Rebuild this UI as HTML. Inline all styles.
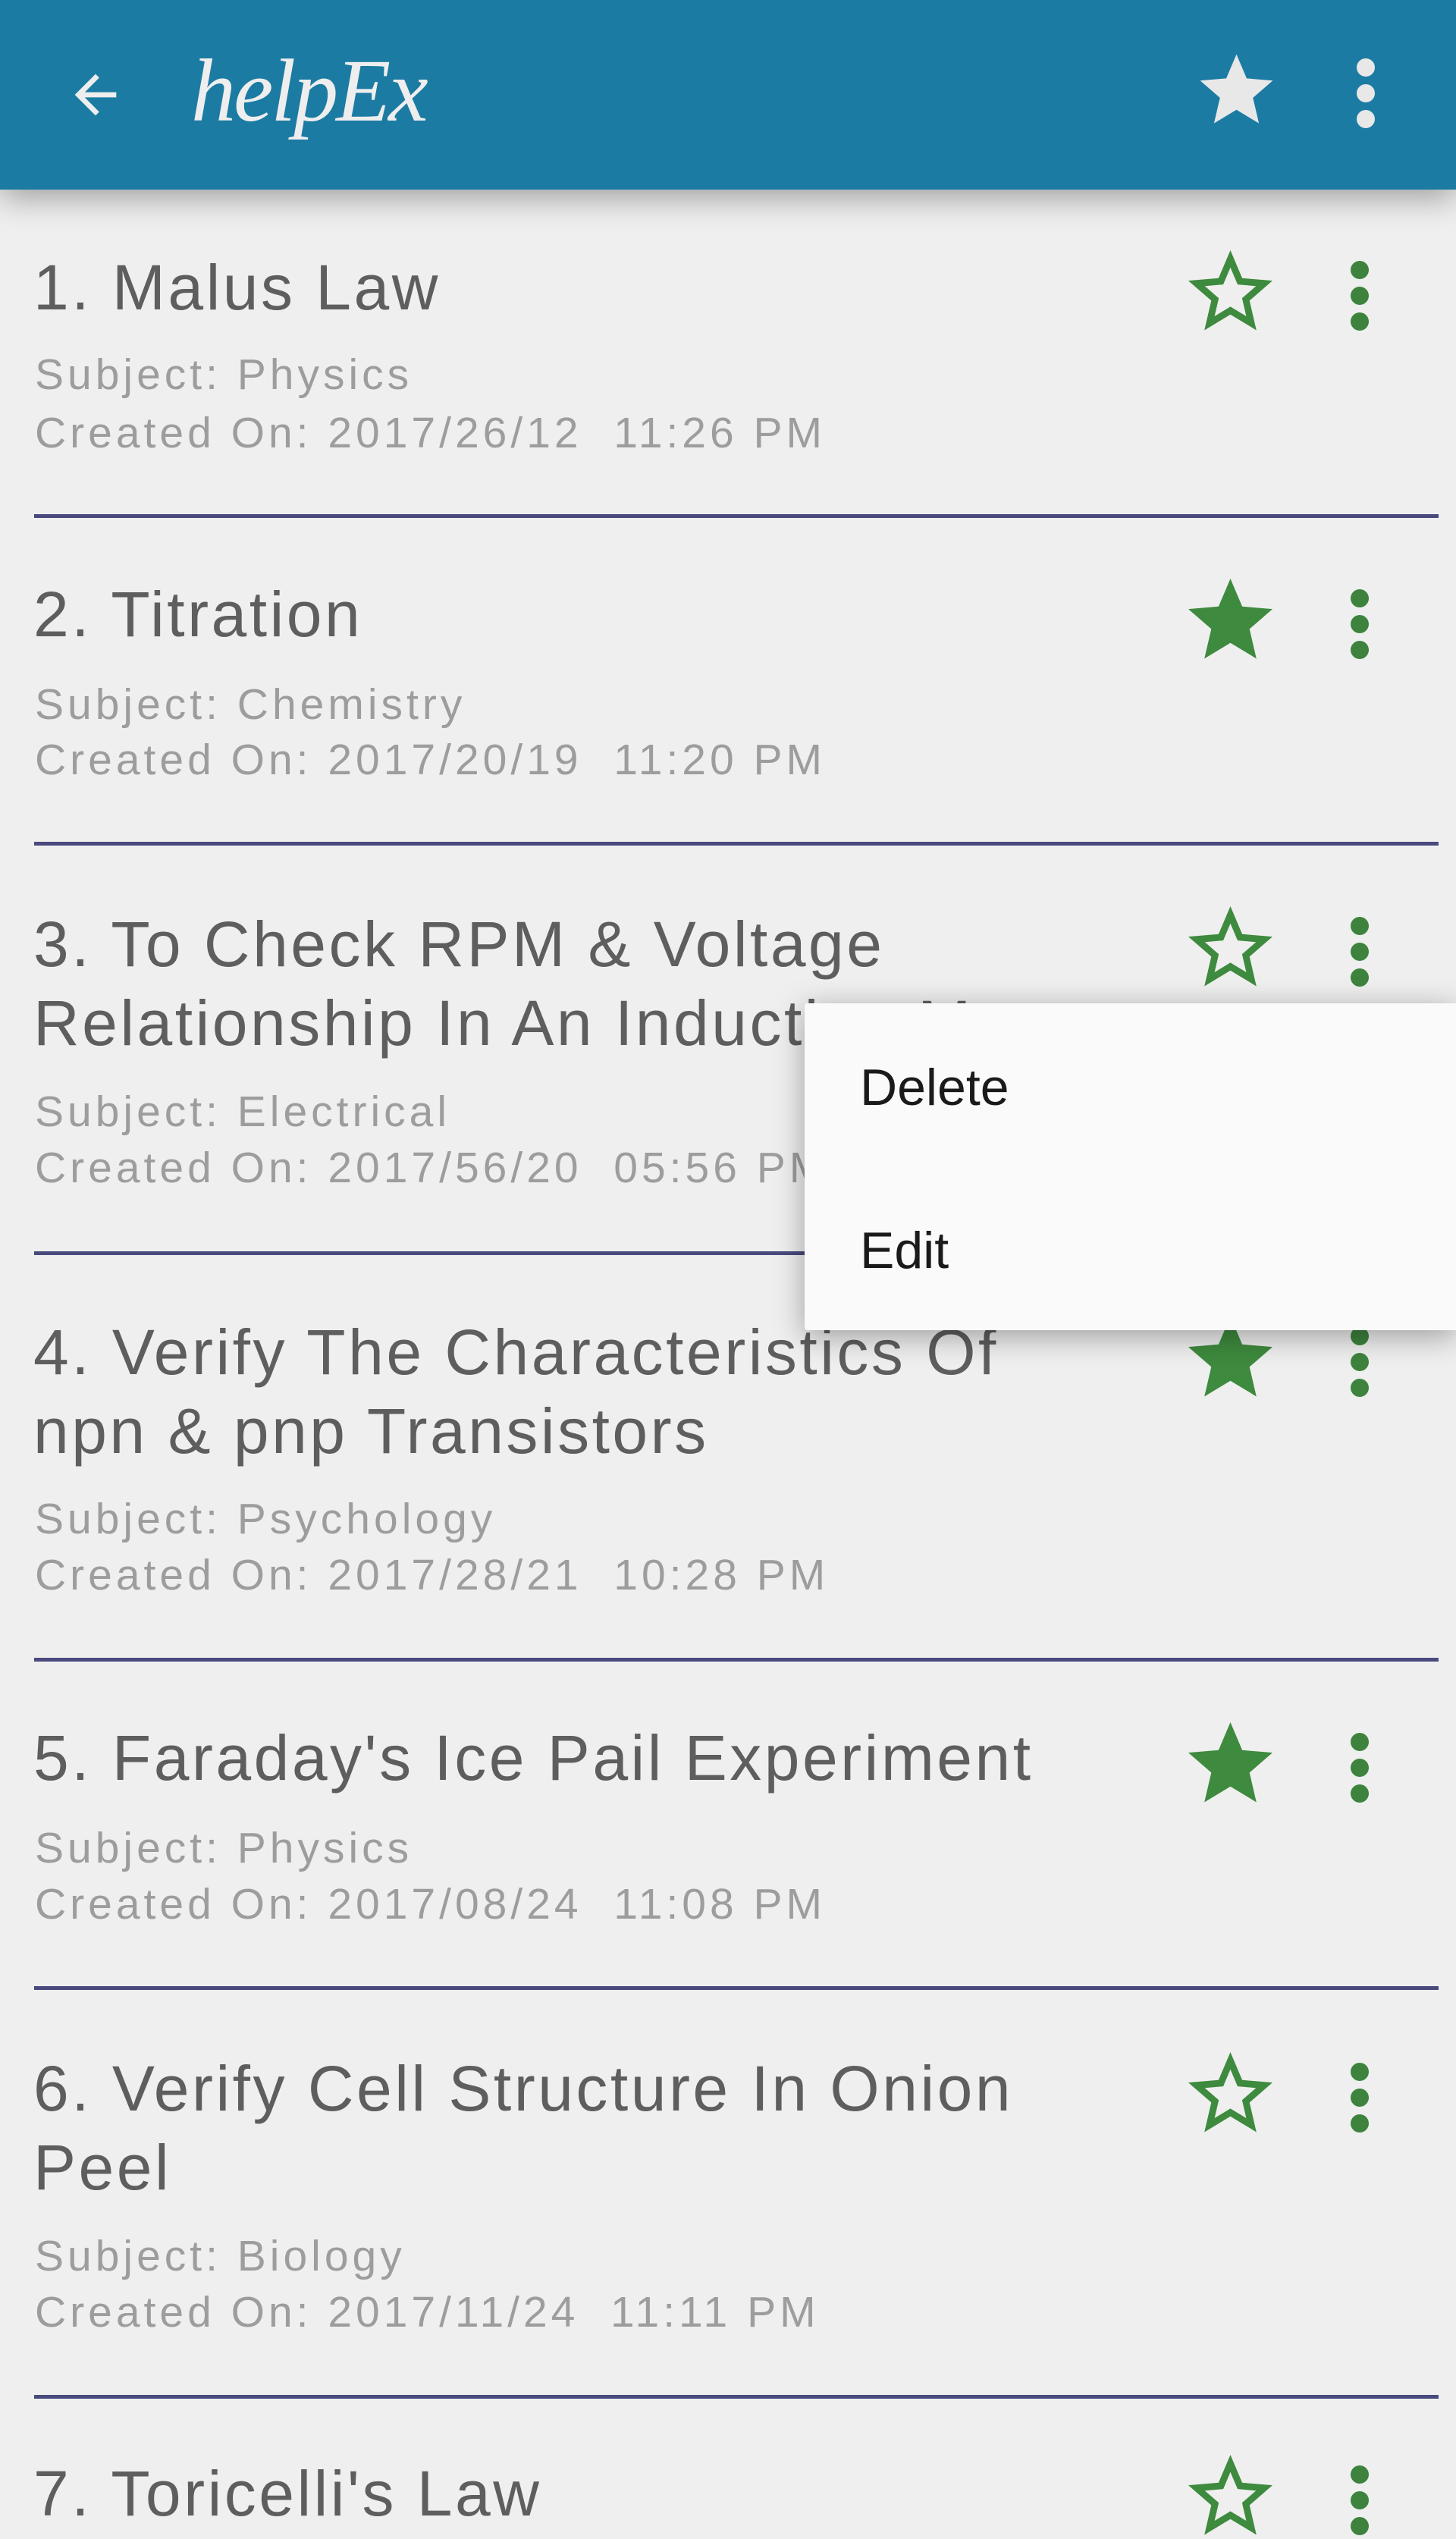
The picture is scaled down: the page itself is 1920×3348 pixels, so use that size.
<!DOCTYPE html>
<html><head><meta charset="utf-8"><style>
*{margin:0;padding:0;box-sizing:border-box}
body{width:1920px;height:3340px;background:#efefef;position:relative;overflow:hidden;font-family:"Liberation Sans",sans-serif}
.hdr{position:absolute;left:0;top:0;width:1920px;height:250px;background:#1b7ba3;box-shadow:0 10px 40px rgba(0,0,0,.35);z-index:5}
.t{position:absolute;left:44px;font-size:84px;line-height:104px;color:#5e5e5e;white-space:nowrap;letter-spacing:3.5px}
.s{position:absolute;left:46px;font-size:57px;line-height:70px;color:#9d9d9d;white-space:nowrap;letter-spacing:5px}
.d{position:absolute;left:45px;width:1852px;height:5px;background:#4a4a7e}
.st{position:absolute;left:1567px;width:111px;height:111px}
.dots{position:absolute;left:1780px;width:26px;height:94px}
.pop{position:absolute;left:1061px;top:1323px;width:859px;height:431px;background:#fafafa;box-shadow:0 8px 40px rgba(0,0,0,.35);z-index:10;border-radius:4px 0 0 4px}
.pop div{position:absolute;left:73px;font-size:68px;color:#1a1a1a}
</style></head><body>
<div class="hdr">
<svg style="position:absolute;left:85px;top:84px" width="82" height="82" viewBox="0 0 24 24"><path d="M20 11H7.83l5.59-5.59L12 4l-8 8 8 8 1.41-1.41L7.83 13H20v-2z" fill="#eee"/></svg>
<div style="position:absolute;left:252px;top:45px;font-family:'Liberation Serif',serif;font-style:italic;font-size:118px;line-height:150px;color:#eee;letter-spacing:-3px">helpEx</div>
<svg style="position:absolute;left:1573px;top:62px" width="115" height="115" viewBox="0 0 24 24"><path d="M12 17.27L18.18 21l-1.64-7.03L22 9.24l-7.19-.61L12 2 9.19 8.63 2 9.24l5.46 4.73L5.82 21z" fill="#e8e8e8"/></svg>
<svg style="position:absolute;left:1788px;top:76px" width="26" height="94"><circle cx="13" cy="13" r="12" fill="#e8e8e8"/><circle cx="13" cy="47" r="12" fill="#e8e8e8"/><circle cx="13" cy="81" r="12" fill="#e8e8e8"/></svg>
</div>

<div class="t" style="top:327px">1. Malus Law</div>
<div class="s" style="top:459px">Subject: Physics</div>
<div class="s" style="top:536px">Created On: 2017/26/12 &nbsp;11:26 PM</div>
<div class="d" style="top:678px"></div>

<div class="t" style="top:758px">2. Titration</div>
<div class="s" style="top:894px">Subject: Chemistry</div>
<div class="s" style="top:967px">Created On: 2017/20/19 &nbsp;11:20 PM</div>
<div class="d" style="top:1110px"></div>

<div class="t" style="top:1193px">3. To Check RPM &amp; Voltage<br>Relationship In An Induction Motor</div>
<div class="s" style="top:1431px">Subject: Electrical</div>
<div class="s" style="top:1505px">Created On: 2017/56/20 &nbsp;05:56 PM</div>
<div class="d" style="top:1650px"></div>

<div class="t" style="top:1731px">4. Verify The Characteristics Of<br>npn &amp; pnp Transistors</div>
<div class="s" style="top:1968px">Subject: Psychology</div>
<div class="s" style="top:2042px">Created On: 2017/28/21 &nbsp;10:28 PM</div>
<div class="d" style="top:2186px"></div>

<div class="t" style="top:2266px">5. Faraday's Ice Pail Experiment</div>
<div class="s" style="top:2402px">Subject: Physics</div>
<div class="s" style="top:2476px">Created On: 2017/08/24 &nbsp;11:08 PM</div>
<div class="d" style="top:2619px"></div>

<div class="t" style="top:2702px">6. Verify Cell Structure In Onion<br>Peel</div>
<div class="s" style="top:2940px">Subject: Biology</div>
<div class="s" style="top:3014px">Created On: 2017/11/24 &nbsp;11:11 PM</div>
<div class="d" style="top:3158px"></div>

<div class="t" style="top:3236px">7. Toricelli's Law</div>

<svg width="0" height="0" style="position:absolute"><defs>
<path id="so" d="M22 9.24l-7.19-.62L12 2 9.19 8.63 2 9.24l5.46 4.73L5.82 21 12 17.27 18.18 21l-1.63-7.03L22 9.24zM12 15.4l-3.76 2.27 1-4.28-3.32-2.88 4.38-.38L12 6.1l1.71 4.04 4.38.38-3.32 2.88 1 4.28L12 15.4z" fill="#3e8a3e"/>
<path id="sf" d="M12 17.27L18.18 21l-1.64-7.03L22 9.24l-7.19-.61L12 2 9.19 8.63 2 9.24l5.46 4.73L5.82 21z" fill="#3e8a3e"/>
<g id="dt"><circle cx="13" cy="13" r="12" fill="#3d833d"/><circle cx="13" cy="47" r="12" fill="#3d833d"/><circle cx="13" cy="81" r="12" fill="#3d833d"/></g>
</defs></svg>

<svg class="st" style="top:330px" viewBox="2 2 20 20"><use href="#so"/></svg>
<svg class="dots" style="top:343px"><use href="#dt"/></svg>
<svg class="st" style="top:763px" viewBox="2 2 20 20"><use href="#sf"/></svg>
<svg class="dots" style="top:776px"><use href="#dt"/></svg>
<svg class="st" style="top:1195px" viewBox="2 2 20 20"><use href="#so"/></svg>
<svg class="dots" style="top:1208px"><use href="#dt"/></svg>
<svg class="st" style="top:1736px" viewBox="2 2 20 20"><use href="#sf"/></svg>
<svg class="dots" style="top:1749px"><use href="#dt"/></svg>
<svg class="st" style="top:2271px" viewBox="2 2 20 20"><use href="#sf"/></svg>
<svg class="dots" style="top:2284px"><use href="#dt"/></svg>
<svg class="st" style="top:2706px" viewBox="2 2 20 20"><use href="#so"/></svg>
<svg class="dots" style="top:2719px"><use href="#dt"/></svg>
<svg class="st" style="top:3237px" viewBox="2 2 20 20"><use href="#so"/></svg>
<svg class="dots" style="top:3250px"><use href="#dt"/></svg>

<div class="pop">
<div style="top:72px">Delete</div>
<div style="top:287px">Edit</div>
</div>
</body></html>
